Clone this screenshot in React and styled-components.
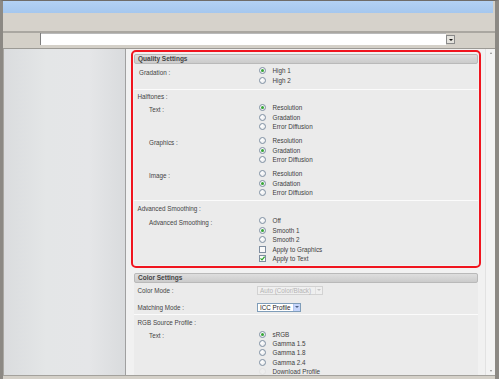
import React from 'react';
import styled, { createGlobalStyle } from 'styled-components';

const GlobalStyle = createGlobalStyle`
  html, body { margin: 0; padding: 0; overflow: hidden; }
  body { font-family: "Liberation Sans", Arial, sans-serif; }
`;

const Window = styled.div`
  width: 499px;
  height: 379px;
  box-sizing: border-box;
  border-top: 1px solid #6f6c68;
  border-left: 3px solid #8c8984;
  border-right: 4px solid #8c8984;
  background: #d4d0c8;
  display: flex;
  flex-direction: column;
  overflow: hidden;
`;

const TitleBar = styled.div`
  height: 12px;
  margin-right: 2px;
  background: linear-gradient(#b3d1f3, #a5c7ee);
  flex: none;
`;

const Toolbar = styled.div`
  height: 18px;
  background: #d6d2cb;
  border-bottom: 2px solid #aaa7a1;
  flex: none;
`;

const AddressRow = styled.div`
  height: 12px;
  display: flex;
  flex: none;
  align-items: stretch;
`;

const AddressLabel = styled.div`
  width: 37px;
  background: #d4d0c8;
  border-right: 1px solid #7e7e7e;
`;

const AddressInput = styled.div`
  width: 405px;
  background: #fff;
  border-top: 1px solid #b9b9b9;
`;

const DropButton = styled.div`
  width: 9px;
  height: 9px;
  margin-top: 2px;
  box-sizing: border-box;
  background: #e4e2dc;
  border: 1px solid #8a8a8a;
  display: flex;
  align-items: center;
  justify-content: center;
  &::after {
    content: '';
    border-left: 2px solid transparent;
    border-right: 2px solid transparent;
    border-top: 2px solid #111;
  }
`;

const Spacer = styled.div`
  height: 3px;
  flex: none;
  border-bottom: 1px solid #9c9a95;
`;

const Main = styled.div`
  height: 326px;
  display: flex;
  flex: none;
  overflow: hidden;
`;

const LeftPanel = styled.div`
  width: 121px;
  flex: none;
  border-left: 1px solid #a9a7a2;
  border-right: 1px solid #a0a0a0;
  background: linear-gradient(to right, #dadcde, #e4e6e7 35%, #e5e6e8 70%, #d9dbdd);
`;

const Content = styled.div`
  width: 359px;
  flex: none;
  box-sizing: border-box;
  padding: 1px 4px 0 5px;
  background: #f1f1f1;
  overflow: hidden;
`;

const Scrollbar = styled.div`
  width: 10px;
  flex: none;
  background: #f3f3f3;
  border-left: 1px solid #e2e2e2;
  display: flex;
  flex-direction: column;
  justify-content: space-between;
  align-items: center;
  padding: 3px 0;
  box-sizing: border-box;
`;

const ScrollArrow = styled.span`
  width: 0;
  height: 0;
  border-left: 1.5px solid transparent;
  border-right: 1.5px solid transparent;
  ${p => (p.$down ? 'border-top: 2px solid #8a8a8a;' : 'border-bottom: 2px solid #8a8a8a;')}
`;

const BottomBar = styled.div`
  height: 4px;
  flex: none;
  box-sizing: border-box;
  border-top: 1px solid #a3a19c;
  background: #d4d0c8;
`;

const Highlight = styled.div`
  border: 2px solid #f0141e;
  border-radius: 5px;
  padding: 1px;
`;

const Section = styled.div`
  background: #ebebeb;
  margin: ${p => p.$margin || '0'};
  padding-bottom: 1.5px;
`;

const SectionHeader = styled.div`
  height: 10px;
  box-sizing: border-box;
  margin-top: ${p => p.$top || '0'};
  border: 1px solid #b9b9b9;
  border-radius: 2px;
  background: linear-gradient(#dedede, #cbcbcb);
  padding-left: 3px;
  font-size: 6.5px;
  font-weight: bold;
  line-height: 8px;
  color: #444;
  white-space: nowrap;
`;

const Separator = styled.div`
  height: 1px;
  background: #fbfbfb;
`;

const Heading = styled.div`
  height: 9.5px;
  line-height: 9.5px;
  margin-top: ${p => p.$top || '0'};
  padding-left: 3.5px;
  font-size: 6.3px;
  color: #444;
  white-space: nowrap;
`;

const Group = styled.div`
  display: grid;
  grid-template-columns: 125px 1fr;
  margin-top: ${p => p.$top || '0'};
  margin-bottom: ${p => p.$bottom || '0'};
`;

const Label = styled.div`
  padding-left: ${p => p.$indent || '3.5px'};
  padding-top: 1.5px;
  height: 9.5px;
  line-height: 9.5px;
  font-size: 6.3px;
  color: #444;
  white-space: nowrap;
`;

const Options = styled.div`
  display: flex;
  flex-direction: column;
`;

const Option = styled.div`
  display: flex;
  align-items: center;
  height: ${p => p.$h || '9.5px'};
  font-size: 6.3px;
  color: #404040;
  white-space: nowrap;
`;

const Radio = styled.span`
  position: relative;
  flex: none;
  width: 7px;
  height: 7px;
  box-sizing: border-box;
  border-radius: 50%;
  margin-right: 6.5px;
  border: 1px solid ${p => (p.$disabled ? '#e2e2e2' : '#7f90a3')};
  background: ${p => (p.$disabled ? '#eeeeee' : 'radial-gradient(circle at 35% 35%, #ffffff, #e3e5e8)')};
  &::after {
    content: '';
    display: ${p => (p.$checked ? 'block' : 'none')};
    position: absolute;
    left: 1px;
    top: 1px;
    width: 3px;
    height: 3px;
    border-radius: 50%;
    background: #35a535;
  }
`;

const Box = styled.span`
  flex: none;
  width: 7px;
  height: 7px;
  box-sizing: border-box;
  margin-right: 6.5px;
  border: 1px solid #7f8ea0;
  background: #fafafa;
  display: flex;
  align-items: center;
  justify-content: center;
  svg { display: block; }
`;

const SelectRow = styled.div`
  display: grid;
  grid-template-columns: 125px 1fr;
  align-items: center;
  height: 14px;
  margin-top: ${p => p.$top || '0'};
`;

const SelectBox = styled.div`
  display: flex;
  align-items: center;
  justify-content: space-between;
  width: ${p => p.$w};
  height: 9px;
  box-sizing: border-box;
  margin-left: -2px;
  padding-left: 2px;
  border: 1px solid ${p => (p.$disabled ? '#d2d2d2' : '#7f9db9')};
  background: ${p => (p.$disabled ? '#efefef' : '#ffffff')};
  color: ${p => (p.$disabled ? '#b4b4b4' : '#222')};
  font-size: 6.3px;
  white-space: nowrap;
`;

const SelectArrow = styled.span`
  width: 7px;
  height: 7px;
  box-sizing: border-box;
  display: flex;
  align-items: center;
  justify-content: center;
  background: ${p => (p.$disabled ? '#efefef' : '#c5d5fb')};
  border-left: 1px solid ${p => (p.$disabled ? '#e0e0e0' : '#b4c6ee')};
  &::after {
    content: '';
    border-left: 2px solid transparent;
    border-right: 2px solid transparent;
    border-top: 2px solid ${p => (p.$disabled ? '#c4c4c4' : '#4d6185')};
  }
`;

const Check = () => (
  <svg width="5" height="5" viewBox="0 0 5 5">
    <path d="M0.5 2.4 L2 3.9 L4.6 0.7" fill="none" stroke="#2ea52e" strokeWidth="1.2" />
  </svg>
);

const RadioGroup = ({ label, indent, items, checked, top, bottom, disabled = [], h }) => (
  <Group $top={top} $bottom={bottom}>
    <Label $indent={indent}>{label}</Label>
    <Options>
      {items.map((it, i) => (
        <Option key={it} $h={h}>
          <Radio $checked={i === checked} $disabled={disabled.includes(i)} />
          {it}
        </Option>
      ))}
    </Options>
  </Group>
);

const halftone = ['Resolution', 'Gradation', 'Error Diffusion'];

export default function App() {
  return (
    <>
      <GlobalStyle />
      <Window>
        <TitleBar />
        <Toolbar />
        <AddressRow>
          <AddressLabel />
          <AddressInput />
          <DropButton />
        </AddressRow>
        <Spacer />
        <Main>
          <LeftPanel />
          <Content>
            <Highlight>
              <Section>
                <SectionHeader $top="1px">Quality Settings</SectionHeader>
                <RadioGroup label="Gradation :" indent="5px" items={['High 1', 'High 2']} checked={0} top="2px" bottom="4px" />
                <Separator />
                <Heading $top="1.5px">Halftones :</Heading>
                <RadioGroup label="Text :" indent="15px" items={halftone} checked={0} top="2px" />
                <RadioGroup label="Graphics :" indent="15px" items={halftone} checked={1} top="4.5px" />
                <RadioGroup label="Image :" indent="15px" items={halftone} checked={1} top="4.5px" bottom="2.5px" />
                <Separator />
                <Heading $top="3px">Advanced Smoothing :</Heading>
                <Group $top="2.5px">
                  <Label $indent="15px">Advanced Smoothing :</Label>
                  <Options>
                    <Option><Radio />Off</Option>
                    <Option><Radio $checked />Smooth 1</Option>
                    <Option><Radio />Smooth 2</Option>
                    <Option><Box />Apply to Graphics</Option>
                    <Option><Box><Check /></Box>Apply to Text</Option>
                  </Options>
                </Group>
              </Section>
            </Highlight>
            <Section $margin="5px 3px 0">
              <SectionHeader>Color Settings</SectionHeader>
              <SelectRow>
                <Label>Color Mode :</Label>
                <SelectBox $w="66px" $disabled>
                  Auto (Color/Black)
                  <SelectArrow $disabled />
                </SelectBox>
              </SelectRow>
              <SelectRow $top="3px">
                <Label>Matching Mode :</Label>
                <SelectBox $w="44px">
                  ICC Profile
                  <SelectArrow />
                </SelectBox>
              </SelectRow>
              <Separator />
              <Heading $top="2.5px">RGB Source Profile :</Heading>
              <RadioGroup
                label="Text :"
                indent="15px"
                h="9.4px"
                items={['sRGB', 'Gamma 1.5', 'Gamma 1.8', 'Gamma 2.4', 'Download Profile']}
                checked={0}
                disabled={[4]}
                top="2.5px"
              />
            </Section>
          </Content>
          <Scrollbar>
            <ScrollArrow />
            <ScrollArrow $down />
          </Scrollbar>
        </Main>
        <BottomBar />
      </Window>
    </>
  );
}
